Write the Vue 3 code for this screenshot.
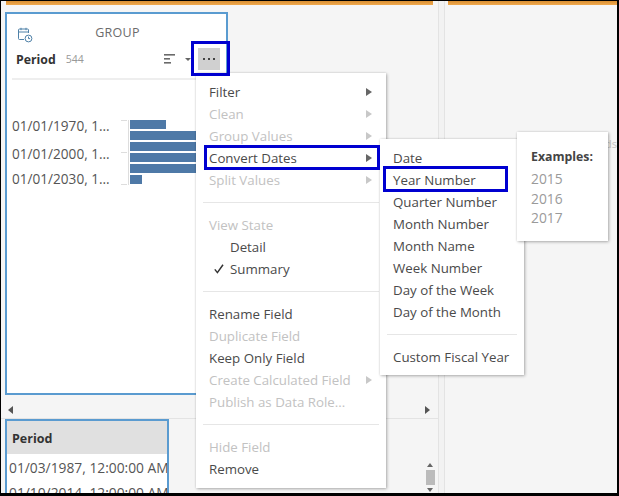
<script setup>
const mainMenu = [
  [
    { t: 'Filter', arrow: true },
    { t: 'Clean', off: true, arrow: true },
    { t: 'Group Values', off: true, arrow: true },
    { t: 'Convert Dates', arrow: true },
    { t: 'Split Values', off: true, arrow: true }
  ],
  [
    { t: 'View State', off: true },
    { t: 'Detail', indent: true },
    { t: 'Summary', indent: true, check: true }
  ],
  [
    { t: 'Rename Field' },
    { t: 'Duplicate Field', off: true },
    { t: 'Keep Only Field' },
    { t: 'Create Calculated Field', off: true, arrow: true },
    { t: 'Publish as Data Role...', off: true }
  ],
  [
    { t: 'Hide Field', off: true },
    { t: 'Remove' }
  ]
]
const subMenu = [
  ['Date', 'Year Number', 'Quarter Number', 'Month Number', 'Month Name', 'Week Number', 'Day of the Week', 'Day of the Month'],
  ['Custom Fiscal Year']
]
const bars = [36, 66, 66, 66, 66, 12]
const labels = ['01/01/1970, 1...', '01/01/2000, 1...', '01/01/2030, 1...']
</script>

<template>
  <div class="frame">
    <div class="workspace">
      <section class="left">
        <div class="orange"></div>
        <div class="card">
          <div class="card-top">
            <svg class="cal" width="16" height="16" viewBox="0 0 16 16" fill="none" stroke="#4f81a8" stroke-width="1">
              <path d="M7 12.5H2.5a1 1 0 0 1-1-1V3a1 1 0 0 1 1-1h8a1 1 0 0 1 1 1v3" />
              <path d="M1.5 5h10M4 .8v2.4M9 .8v2.4" />
              <circle cx="11.5" cy="11.5" r="3.4" />
              <path d="M11.5 9.6v2h1.6" />
            </svg>
            <span class="group">GROUP</span>
          </div>
          <div class="card-head">
            <span class="period">Period</span>
            <span class="count">544</span>
            <span class="spacer"></span>
            <svg class="sort" width="12" height="11" viewBox="0 0 12 11" fill="#6a6a6a">
              <rect x="0" y="0" width="11" height="1.6" />
              <rect x="0" y="4" width="6" height="1.6" />
              <rect x="0" y="8" width="7" height="1.6" />
            </svg>
            <span class="caret"></span>
            <span class="dots"><i></i><i></i><i></i></span>
          </div>
          <div class="chart">
            <div class="labels">
              <span v-for="l in labels" :key="l">{{ l }}</span>
            </div>
            <div class="axis">
              <i></i><i></i><i></i>
            </div>
            <div class="bars">
              <div v-for="(b, i) in bars" :key="i" class="bar" :style="{ width: b + 'px' }"></div>
            </div>
          </div>
        </div>
        <div class="hscroll">
          <span class="tri-left"></span>
          <span class="tri-right"></span>
        </div>
        <div class="table-row">
          <div class="table">
            <div class="th">Period</div>
            <div class="td">01/03/1987, 12:00:00 AM</div>
            <div class="td">01/10/2014, 12:00:00 AM</div>
          </div>
          <div class="vscroll">
            <span class="tri-up"></span>
            <span class="thumb"></span>
            <span class="tri-down"></span>
          </div>
        </div>
      </section>
      <div class="gutter"></div>
      <section class="right">
        <div class="orange"></div>
        <span class="peek">ds</span>
      </section>
    </div>

    <nav class="menu main-menu">
      <template v-for="(grp, gi) in mainMenu" :key="gi">
        <hr v-if="gi" class="sep" />
        <div v-for="it in grp" :key="it.t" class="item" :class="{ off: it.off, indent: it.indent }">
          <svg v-if="it.check" class="check" width="10" height="10" viewBox="0 0 10 10" fill="none" stroke="#333" stroke-width="1.5">
            <path d="M.8 5.4 3.4 8.6 9 .8" />
          </svg>
          <span>{{ it.t }}</span>
          <span v-if="it.arrow" class="arrow"></span>
        </div>
      </template>
    </nav>

    <nav class="menu sub-menu">
      <template v-for="(grp, gi) in subMenu" :key="gi">
        <hr v-if="gi" class="sep" />
        <div v-for="t in grp" :key="t" class="item">{{ t }}</div>
      </template>
    </nav>

    <aside class="menu examples">
      <div class="ex-title">Examples:</div>
      <div class="ex">2015</div>
      <div class="ex">2016</div>
      <div class="ex">2017</div>
    </aside>

    <div class="mark mark-dots"></div>
    <div class="mark mark-convert"></div>
    <div class="mark mark-year"></div>
  </div>
</template>

<style>
html, body { margin: 0; background: #000; }
</style>

<style scoped>
.frame {
  position: relative;
  box-sizing: border-box;
  width: 619px;
  height: 496px;
  overflow: hidden;
  background: #f5f5f5;
  border: solid #000;
  border-width: 1px 2px 3px 1px;
  font-family: "Open Sans", "Noto Sans", sans-serif;
  font-size: 13.3px;
  color: #4a4a4a;
}
.workspace { display: flex; height: 100%; }
.left { width: 437px; display: flex; flex-direction: column; background: #f5f5f5; flex: none; border-right: 1px solid #e3e3e3; box-sizing: content-box; }
.left > .orange { margin: 0 5px 0 5px; }
.gutter { width: 5px; flex: none; background: #f2f2f2; border-right: 1px solid #e3e3e3; box-sizing: content-box; }
.right { flex: 1; position: relative; background: #f5f5f5; padding-left: 3px; }
.orange { height: 4px; background: linear-gradient(#d98f32, #f0a94e); flex: none; }
.peek { position: absolute; right: 0; top: 135px; color: #c4c4c4; font-size: 11px; }
.card {
  box-sizing: border-box;
  width: 223px;
  height: 383px;
  margin: 7px 0 0 4px;
  padding: 0 0 0 8px;
  background: #fff;
  border: 2px solid #5a9bd0;
  flex: none;
}
.card-top { position: relative; display: flex; justify-content: center; padding-top: 10px; height: 18px; }
.cal { position: absolute; left: 2px; top: 13px; }
.group { font-size: 12.5px; color: #6b6b6b; letter-spacing: .3px; margin-left: -6px; }
.card-head { display: flex; align-items: center; height: 24px; margin-top: 5px; padding: 0 6px 0 1px; }
.period { font-weight: 700; font-size: 12.3px; color: #333; }
.count { margin-left: 10px; font-size: 10.5px; color: #999; }
.spacer { flex: 1; }
.sort { margin-right: 9px; }
.caret { width: 0; height: 0; border: 3px solid transparent; border-top: 3px solid #666; border-bottom: 0; margin-right: 7px; }
.dots {
  width: 22px; height: 22px; background: #d0d0d0;
  display: flex; align-items: center; justify-content: center; gap: 3px;
}
.dots i { width: 2px; height: 2px; background: #444; display: block; }
.chart {
  position: relative;
  display: flex;
  margin-top: 7px;
  padding-top: 40px;
  border-top: 2px solid #eee;
  margin-left: -3px;
}
.labels { display: flex; flex-direction: column; width: 106px; margin: -7px 0 0 0; }
.labels span { display: block; height: 26px; line-height: 26px; font-size: 13.6px; color: #555; white-space: nowrap; }
.labels span:nth-child(2) { margin-top: 2px; }
.labels span:nth-child(3) { margin-top: -1px; }
.axis { width: 8px; height: 65px; margin: 0 0 0 3px; border-right: 1px solid #ddd; display: flex; flex-direction: column; justify-content: space-between; align-items: flex-end; box-sizing: border-box; }
.axis i { display: block; width: 6px; height: 1px; background: #ddd; margin-right: 1px; }
.bars { display: flex; flex-direction: column; gap: 2px; margin-left: 1px; }
.bar { height: 9px; background: #4e79a7; }
.hscroll { height: 24px; flex: none; display: flex; align-items: center; justify-content: space-between; padding: 6px 8px 0 7px; box-sizing: border-box; border-bottom: 1px solid #e3e3e3; }
.tri-left { border: 4px solid transparent; border-right: 5px solid #555; border-left: 0; }
.tri-right { border: 4px solid transparent; border-left: 5px solid #555; border-right: 0; }
.table-row { flex: 1; display: flex; justify-content: space-between; min-height: 0; }
.table {
  box-sizing: border-box;
  width: 164px;
  margin-left: 4px;
  background: #fff;
  border: 2px solid #5a9bd0;
  border-bottom: 0;
  overflow: hidden;
}
.th { height: 33px; line-height: 35px; background: #e0e0e0; font-weight: 700; font-size: 12.5px; padding-left: 5px; color: #333; }
.td { height: 25px; line-height: 28px; font-size: 13.8px; padding-left: 2px; white-space: nowrap; color: #555; }
.vscroll { width: 14px; margin-right: 1px; display: flex; flex-direction: column; align-items: center; padding-top: 44px; box-sizing: border-box; gap: 2px; }
.tri-up { border: 3px solid transparent; border-bottom: 4px solid #666; border-top: 0; }
.thumb { width: 9px; height: 15px; background: #bbb; margin: 1px 0; flex: none; }
.tri-down { border: 3px solid transparent; border-top: 4px solid #666; border-bottom: 0; }

.menu {
  position: absolute;
  box-sizing: border-box;
  background: #fff;
  box-shadow: 1px 1px 3px rgba(0, 0, 0, .28), 0 0 2px rgba(0, 0, 0, .12);
}
.main-menu { left: 195px; top: 72px; width: 190px; height: 415px; padding-top: 8px; }
.sub-menu { left: 379px; top: 138px; width: 144px; height: 236px; padding-top: 8px; }
.examples { left: 516px; top: 131px; width: 91px; height: 109px; padding: 15px 0 0 14px; }
.item {
  position: relative;
  height: 22px;
  line-height: 22px;
  padding-left: 13px;
  color: #4a4a4a;
  white-space: nowrap;
}
.item.off { color: #c2c2c2; }
.item.indent { padding-left: 34px; }
.check { position: absolute; left: 18px; top: 6px; }
.arrow {
  position: absolute;
  right: 14px;
  top: 7px;
  border: 4px solid transparent;
  border-left: 6px solid #666;
  border-right: 0;
}
.off .arrow { border-left-color: #c8c8c8; }
.sep { height: 1px; border: 0; background: #e6e6e6; margin: 11px 7px; }
.ex-title { font-weight: 700; font-size: 12.3px; color: #444; height: 22px; line-height: 20px; }
.ex { height: 19.5px; line-height: 20px; color: #9a9a9a; font-size: 13.8px; }

.mark { position: absolute; box-sizing: border-box; border: 3px solid #0000d0; pointer-events: none; }
.mark-dots { left: 190px; top: 40px; width: 39px; height: 35px; }
.mark-convert { left: 203px; top: 144px; width: 176px; height: 25px; }
.mark-year { left: 382px; top: 165px; width: 125px; height: 26px; }
</style>
